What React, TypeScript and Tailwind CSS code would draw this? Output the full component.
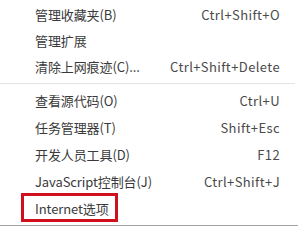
const font = {
  fontFamily: '"Microsoft YaHei", "Noto Sans CJK SC", "Noto Sans", sans-serif',
};

type Item = { label: string; shortcut?: string };

const top: Item[] = [
  { label: "管理收藏夹(B)", shortcut: "Ctrl+Shift+O" },
  { label: "管理扩展" },
  { label: "清除上网痕迹(C)...", shortcut: "Ctrl+Shift+Delete" },
];

const bottom: Item[] = [
  { label: "查看源代码(O)", shortcut: "Ctrl+U" },
  { label: "任务管理器(T)", shortcut: "Shift+Esc" },
  { label: "开发人员工具(D)", shortcut: "F12" },
  { label: "JavaScript控制台(J)", shortcut: "Ctrl+Shift+J" },
  { label: "Internet选项" },
];

function Row({ item, h }: { item: Item; h: string }) {
  return (
    <div className={`flex items-center justify-between pl-[35px] pr-[18px] ${h}`}>
      <span className="text-[13px] tracking-[-0.1px] text-[#3a3a3a]">{item.label}</span>
      {item.shortcut && (
        <span className="text-[13px] tracking-[0.4px] text-[#4a4a4a]">{item.shortcut}</span>
      )}
    </div>
  );
}

export default function App() {
  return (
    <div className="relative h-[227px] w-[298px] overflow-hidden bg-white" style={font}>
      <div className="pt-[2px]">
        {top.map((it) => (
          <Row key={it.label} item={it} h="h-[26px]" />
        ))}
      </div>
      <div className="mr-[3px] mt-[3px] h-px bg-[#e3e3e3]" />
      <div className="mt-[3px]">
        {bottom.map((it) => (
          <Row key={it.label} item={it} h="h-[27px]" />
        ))}
      </div>
      <div className="mt-[3px] h-px bg-[#a0a0a0]" />
      {/* highlight box */}
      <div className="absolute left-[21px] top-[193px] h-[29px] w-[97px] border-[3px] border-[#d0101c]" />
    </div>
  );
}
